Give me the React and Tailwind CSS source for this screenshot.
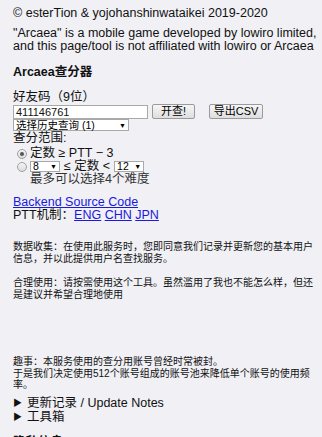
import React from 'react';

const font = { fontFamily: '"Liberation Sans", Arial, "Noto Sans CJK SC", sans-serif' };

const Select = ({ label, className }) => (
  <div className={`flex items-center justify-between bg-white border border-[#a9a9a9] px-[2px] text-[10.5px] leading-none text-black ${className}`}>
    <span>{label}</span>
    <span className="text-[7px]">▼</span>
  </div>
);

const Button = ({ children, className }) => (
  <div className={`flex items-center justify-center h-[15px] border border-[#9a9a9a] rounded-[2px] bg-gradient-to-b from-[#f6f6f6] to-[#dedede] text-[11px] leading-none text-black ${className}`}>
    {children}
  </div>
);

const Radio = ({ checked }) => (
  <div className="w-[10px] h-[10px] rounded-full border border-[#a0a0a0] bg-gradient-to-b from-[#f4f4f4] to-[#dcdcdc] flex items-center justify-center">
    {checked && <div className="w-[4px] h-[4px] rounded-full bg-[#555]" />}
  </div>
);

export default function App() {
  return (
    <div className="h-[437px] bg-[#f0f0f5] text-[#111] pl-[13px] pt-[6px] overflow-hidden whitespace-nowrap" style={font}>
      <div className="text-[12.5px] leading-[14px]">© esterTion &amp; yojohanshinwataikei 2019-2020</div>

      <div className="mt-[7px] text-[12.5px] leading-[12.5px]">
        <div>"Arcaea" is a mobile game developed by lowiro limited,</div>
        <div>and this page/tool is not affiliated with lowiro or Arcaea</div>
      </div>

      <div className="mt-[13px] text-[12.5px] leading-[14px] font-bold">Arcaea查分器</div>

      <div className="mt-[11px] text-[12.5px] leading-[14px]">好友码（9位）</div>
      <div className="flex items-center h-[15px]">
        <div className="w-[135px] h-[14px] bg-white border border-[#a9a9a9] text-[11px] leading-[12px] px-[2px]">411146761</div>
        <Button className="ml-[4px] w-[43px]">开查!</Button>
        <Button className="ml-[14px] w-[54px]">导出CSV</Button>
      </div>
      <Select label="选择历史查询 (1)" className="w-[116px] h-[12px]" />

      <div className="mt-[1px] text-[12.5px] leading-[12px]">查分范围:</div>
      <div className="mt-[3px] flex items-center h-[13px] pl-[4px] text-[12.5px]">
        <Radio checked />
        <span className="ml-[3px]">定数 ≥ PTT − 3</span>
      </div>
      <div className="flex items-center h-[13px] pl-[4px] text-[12.5px]">
        <Radio />
        <Select label="8" className="ml-[3px] w-[30px] h-[11px]" />
        <span className="ml-[4px]">≤ 定数 &lt;</span>
        <Select label="12" className="ml-[4px] w-[30px] h-[11px]" />
      </div>
      <div className="pl-[17px] text-[12.5px] leading-[13px] text-[#333]">最多可以选择4个难度</div>

      <div className="mt-[10px] text-[12.5px] leading-[13px]">
        <a className="text-[#1a1adb] underline">Backend Source Code</a>
      </div>
      <div className="text-[12.5px] leading-[13px]">
        PTT机制：<a className="text-[#1a1adb] underline">ENG</a> <a className="text-[#1a1adb] underline">CHN</a>{' '}
        <a className="text-[#1a1adb] underline">JPN</a>
      </div>

      <div className="mt-[19px] text-[10px] leading-[12px]">
        <div>数据收集：在使用此服务时，您即同意我们记录并更新您的基本用户</div>
        <div>信息，并以此提供用户名查找服务。</div>
      </div>
      <div className="mt-[12px] text-[10px] leading-[12px]">
        <div>合理使用：请按需使用这个工具。虽然滥用了我也不能怎么样，但还</div>
        <div>是建议并希望合理地使用</div>
      </div>

      <div className="mt-[55px] text-[10px] leading-[11.5px]">
        <div>趣事：本服务使用的查分用账号曾经时常被封。</div>
        <div>于是我们决定使用512个账号组成的账号池来降低单个账号的使用频</div>
        <div>率。</div>
      </div>

      <div className="mt-[5px] text-[12.5px] leading-[14px]">
        <div className="flex items-center">
          <span className="text-[9px] w-[14px]">▶</span>
          <span>更新记录 / Update Notes</span>
        </div>
        <div className="flex items-center">
          <span className="text-[9px] w-[14px]">▶</span>
          <span>工具箱</span>
        </div>
      </div>

      <div className="mt-[11px] text-[12.5px] leading-[14px] font-bold">隐私信息</div>
    </div>
  );
}
